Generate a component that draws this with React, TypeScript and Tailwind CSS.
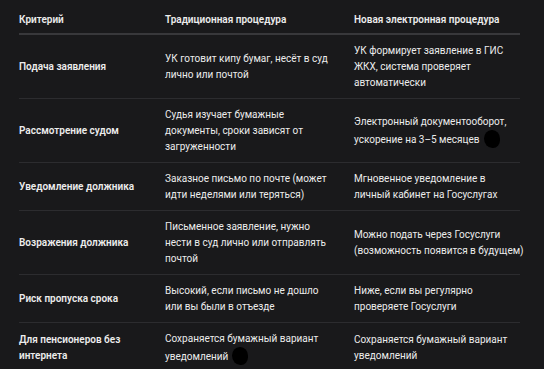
import React from 'react';

type Row = {
  criterion: string[];
  oldWay: string[];
  newWay: string[];
  oldBlob?: boolean;
  newBlob?: boolean;
};

const rows: Row[] = [
  {
    criterion: ['Подача заявления'],
    oldWay: ['УК готовит кипу бумаг, несёт в суд', 'лично или почтой'],
    newWay: ['УК формирует заявление в ГИС', 'ЖКХ, система проверяет', 'автоматически'],
  },
  {
    criterion: ['Рассмотрение судом'],
    oldWay: ['Судья изучает бумажные', 'документы, сроки зависят от', 'загруженности'],
    newWay: ['Электронный документооборот,', 'ускорение на 3–5 месяцев'],
    newBlob: true,
  },
  {
    criterion: ['Уведомление должника'],
    oldWay: ['Заказное письмо по почте (может', 'идти неделями или теряться)'],
    newWay: ['Мгновенное уведомление в', 'личный кабинет на Госуслугах'],
  },
  {
    criterion: ['Возражения должника'],
    oldWay: ['Письменное заявление, нужно', 'нести в суд лично или отправлять', 'почтой'],
    newWay: ['Можно подать через Госуслуги', '(возможность появится в будущем)'],
  },
  {
    criterion: ['Риск пропуска срока'],
    oldWay: ['Высокий, если письмо не дошло', 'или вы были в отъезде'],
    newWay: ['Ниже, если вы регулярно', 'проверяете Госуслуги'],
  },
  {
    criterion: ['Для пенсионеров без', 'интернета'],
    oldWay: ['Сохраняется бумажный вариант', 'уведомлений'],
    newWay: ['Сохраняется бумажный вариант', 'уведомлений'],
    oldBlob: true,
  },
];

const Blob = () => (
  <span className="inline-block align-[-5px] ml-[4px] w-[16px] h-[18px] rounded-[50%_50%_45%_55%] bg-black" />
);

const Lines = ({ lines, blob }: { lines: string[]; blob?: boolean }) => (
  <span>
    {lines.map((l, i) => (
      <React.Fragment key={i}>
        {i > 0 && <br />}
        {l}
      </React.Fragment>
    ))}
    {blob && <Blob />}
  </span>
);

export default function App() {
  const cell = 'flex items-center py-[7.5px] whitespace-nowrap border-b border-[#2c2c2f]';
  const head = 'pt-[12px] pb-[5px] font-semibold border-b-2 border-[#38383b]';

  return (
    <div
      className="w-[544px] h-[369px] overflow-hidden bg-[#19191b] text-[#ececec] text-[10px] leading-[16px]"
      style={{ fontFamily: 'Roboto, "Noto Sans", sans-serif' }}
    >
      <div className="ml-[19px] w-[501px] grid grid-cols-[146px_189px_166px]">
        {/* Header */}
        <div className={head}>Критерий</div>
        <div className={head}>Традиционная процедура</div>
        <div className={head}>Новая электронная процедура</div>

        {rows.map((r, i) => {
          const last = i === rows.length - 1 ? 'border-b-0' : '';
          return (
            <React.Fragment key={i}>
              <div className={`${cell} font-semibold ${last}`}>
                <Lines lines={r.criterion} />
              </div>
              <div className={`${cell} ${last}`}>
                <Lines lines={r.oldWay} blob={r.oldBlob} />
              </div>
              <div className={`${cell} ${last}`}>
                <Lines lines={r.newWay} blob={r.newBlob} />
              </div>
            </React.Fragment>
          );
        })}
      </div>
    </div>
  );
}
